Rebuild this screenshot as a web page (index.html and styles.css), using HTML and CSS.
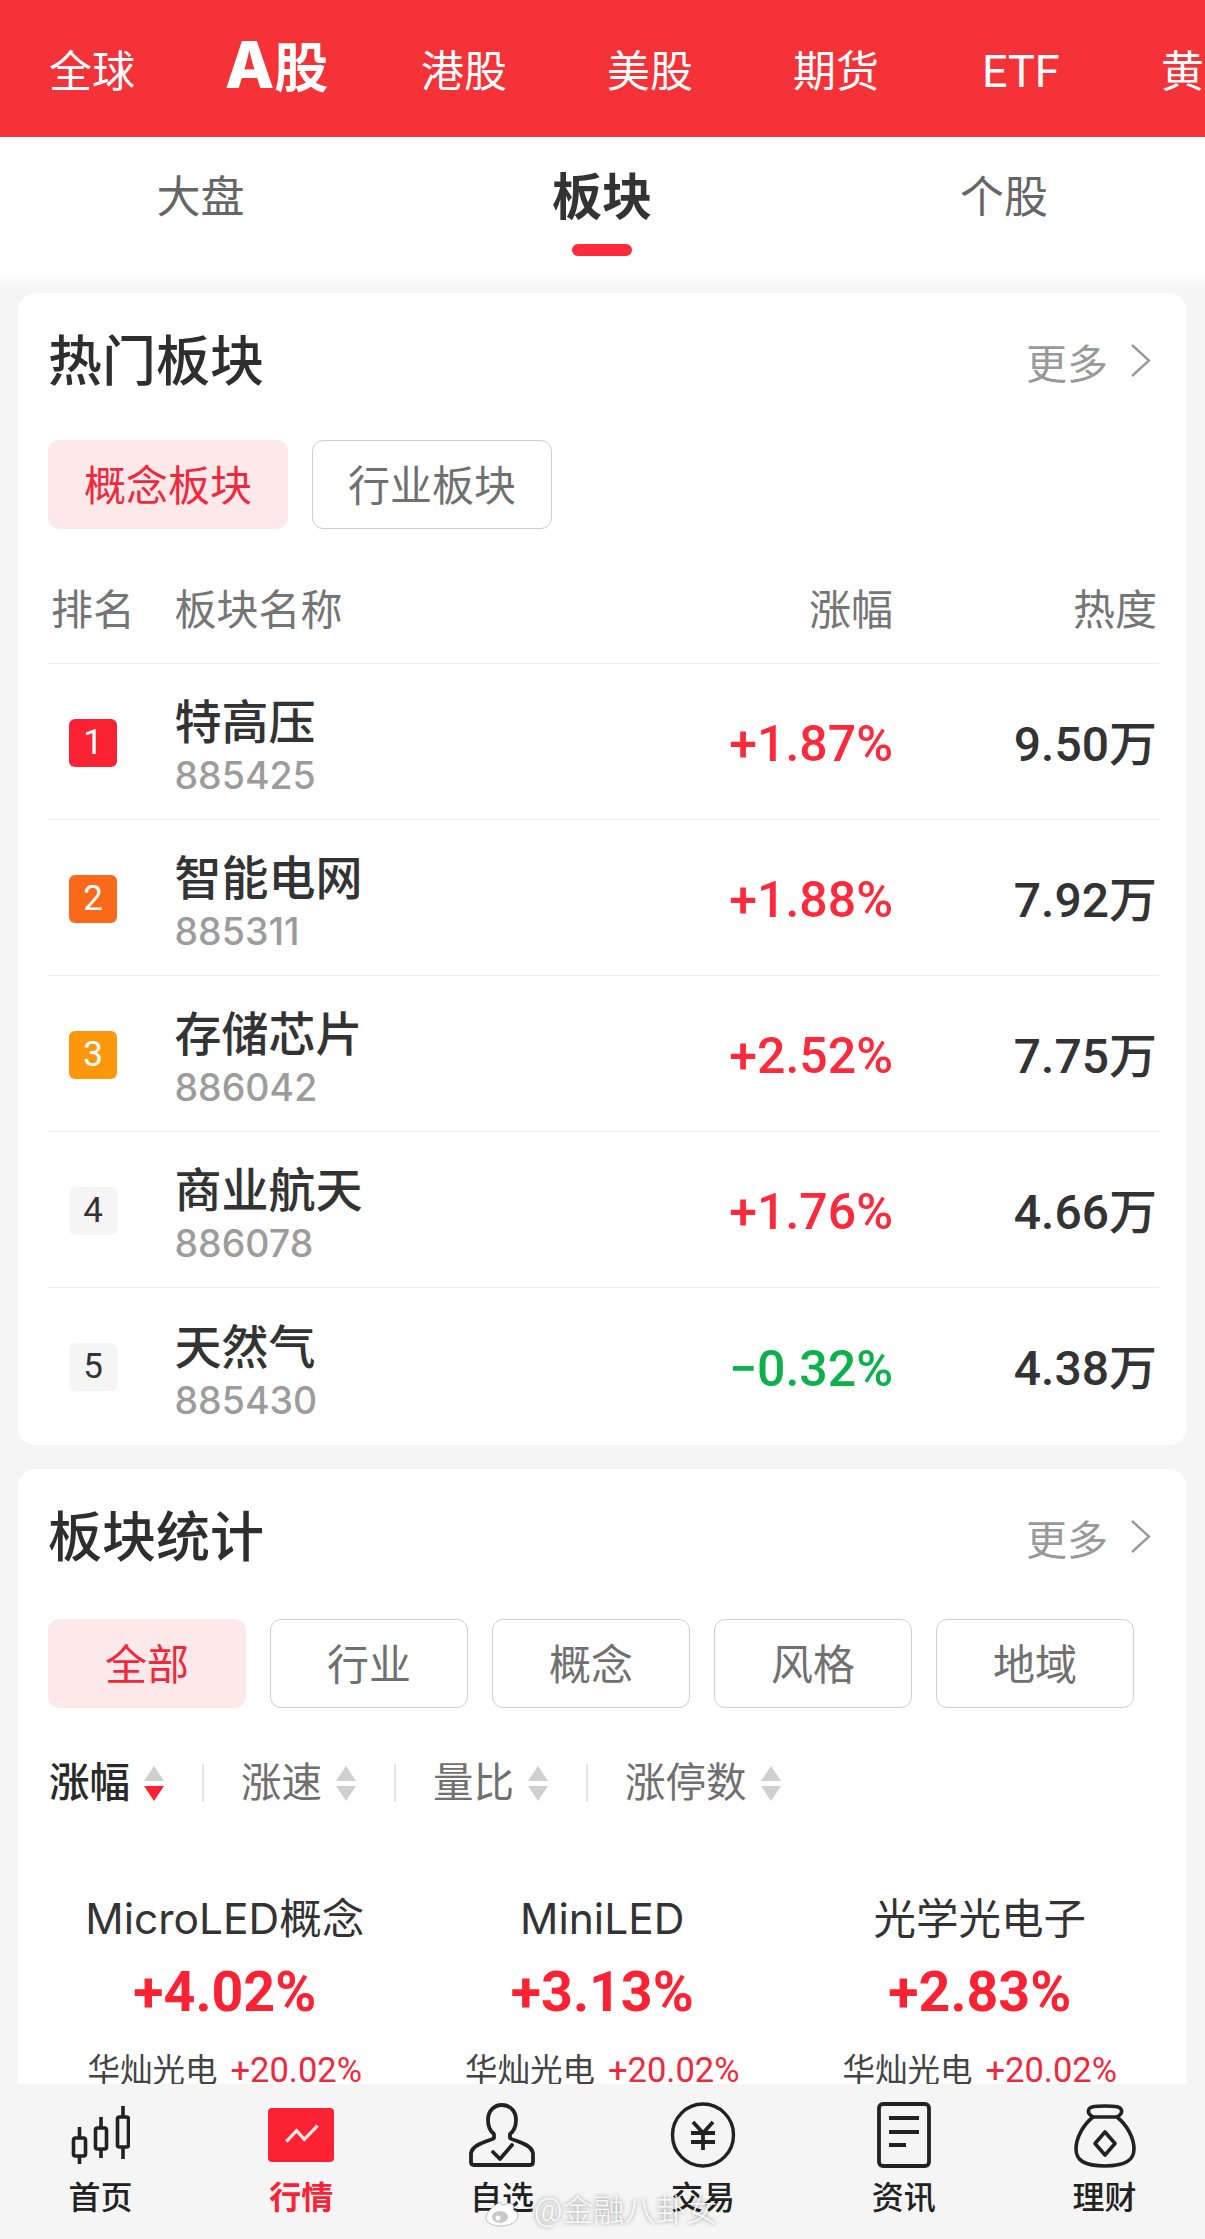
FILE: index.html
```html
<!DOCTYPE html>
<html lang="zh">
<head>
<meta charset="utf-8">
<title>行情</title>
<link rel="stylesheet" href="styles.css">
</head>
<body>
<div class="app">
  <header class="top">
    <span class="top-item t1">全球</span>
    <span class="top-item t2 on"><span class="big-a">A</span>股</span>
    <span class="top-item t3">港股</span>
    <span class="top-item t4">美股</span>
    <span class="top-item t5">期货</span>
    <span class="top-item t6">ETF</span>
    <span class="top-item t7">黄</span>
  </header>
  <nav class="sub">
    <span class="sub-item">大盘</span>
    <span class="sub-item on">板块</span>
    <span class="sub-item">个股</span>
  </nav>
  <main class="content">
    <section class="card hot">
      <div class="card-head">
        <h2>热门板块</h2>
        <span class="more">更多<svg class="chev" viewBox="0 0 21 33"><path d="M2 1l17 15.500L2 32" fill="none" stroke="#9a9a9a" stroke-width="2.400"/></svg></span>
      </div>
      <div class="chips hot-chips">
        <span class="chip on">概念板块</span>
        <span class="chip">行业板块</span>
      </div>
      <div class="thead">
        <span class="c-rank">排名</span>
        <span class="c-name">板块名称</span>
        <span class="c-pct">涨幅</span>
        <span class="c-val">热度</span>
      </div>
      <div class="row">
        <span class="c-rank"><b class="badge r1">1</b></span>
        <span class="c-name"><em>特高压</em><small>885425</small></span>
        <span class="c-pct up">+1.87%</span>
        <span class="c-val">9.50万</span>
      </div>
      <div class="row">
        <span class="c-rank"><b class="badge r2">2</b></span>
        <span class="c-name"><em>智能电网</em><small>885311</small></span>
        <span class="c-pct up">+1.88%</span>
        <span class="c-val">7.92万</span>
      </div>
      <div class="row">
        <span class="c-rank"><b class="badge r3">3</b></span>
        <span class="c-name"><em>存储芯片</em><small>886042</small></span>
        <span class="c-pct up">+2.52%</span>
        <span class="c-val">7.75万</span>
      </div>
      <div class="row">
        <span class="c-rank"><b class="badge">4</b></span>
        <span class="c-name"><em>商业航天</em><small>886078</small></span>
        <span class="c-pct up">+1.76%</span>
        <span class="c-val">4.66万</span>
      </div>
      <div class="row">
        <span class="c-rank"><b class="badge">5</b></span>
        <span class="c-name"><em>天然气</em><small>885430</small></span>
        <span class="c-pct down">−0.32%</span>
        <span class="c-val">4.38万</span>
      </div>
    </section>
    <section class="card stats">
      <div class="card-head">
        <h2>板块统计</h2>
        <span class="more">更多<svg class="chev" viewBox="0 0 21 33"><path d="M2 1l17 15.500L2 32" fill="none" stroke="#9a9a9a" stroke-width="2.400"/></svg></span>
      </div>
      <div class="chips stat-chips">
        <span class="chip wide on">全部</span>
        <span class="chip wide">行业</span>
        <span class="chip wide">概念</span>
        <span class="chip wide">风格</span>
        <span class="chip wide">地域</span>
      </div>
      <div class="sorts">
        <span class="sort on">涨幅<i class="arrows"><u></u><u class="dn"></u></i></span>
        <span class="sort">涨速<i class="arrows"><u></u><u></u></i></span>
        <span class="sort">量比<i class="arrows"><u></u><u></u></i></span>
        <span class="sort">涨停数<i class="arrows"><u></u><u></u></i></span>
      </div>
      <div class="tiles">
        <div class="tile">
          <div class="tile-name">MicroLED概念</div>
          <div class="tile-pct">+4.02%</div>
          <div class="tile-sub">华灿光电<span>+20.02%</span></div>
        </div>
        <div class="tile">
          <div class="tile-name">MiniLED</div>
          <div class="tile-pct">+3.13%</div>
          <div class="tile-sub">华灿光电<span>+20.02%</span></div>
        </div>
        <div class="tile">
          <div class="tile-name">光学光电子</div>
          <div class="tile-pct">+2.83%</div>
          <div class="tile-sub">华灿光电<span>+20.02%</span></div>
        </div>
      </div>
    </section>
  </main>
  <footer class="tabbar">
    <div class="tab">
      <svg class="ico" width="60" height="66" viewBox="0 0 60 66" fill="none" stroke="#222" stroke-width="3.600" stroke-linejoin="round">
        <rect x="3.500" y="36" width="12" height="18" rx="2"/><path d="M9.500 25v11M9.500 54v8"/>
        <rect x="25.500" y="26" width="11" height="21" rx="2"/><path d="M31 15v11M31 47v9"/>
        <rect x="47.500" y="15" width="11" height="30" rx="2"/><path d="M53 4v11M53 45v12"/>
      </svg>
      <span>首页</span>
    </div>
    <div class="tab on">
      <svg class="ico" width="66" height="66" viewBox="0 0 66 66" fill="none">
        <rect x="0" y="6" width="66" height="54" rx="4" fill="#fb2233"/>
        <path d="M18.300 39.700l10.300-11 7.700 8.600 13.300-13.600" stroke="#f6e9e6" stroke-width="3.200"/>
      </svg>
      <span>行情</span>
    </div>
    <div class="tab">
      <svg class="ico" width="66" height="66" viewBox="0 0 66 66" fill="none" stroke="#222" stroke-width="3.800" stroke-linejoin="round" stroke-linecap="round">
        <path d="M33 3c-9 0-14 7-14 15 0 6 2 11 6 14v4c-3 3-21 5-23 15v9c0 2 1 3 3 3h56c2 0 3-1 3-3v-9c-2-10-20-12-23-15v-4c4-3 6-8 6-14 0-8-5-15-14-15z"/>
        <path d="M24 50l7 7 12-14"/>
      </svg>
      <span>自选</span>
    </div>
    <div class="tab">
      <svg class="ico" width="66" height="66" viewBox="0 0 66 66" fill="none" stroke="#222" stroke-width="3.400">
        <ellipse cx="33" cy="33" rx="30.500" ry="31"/>
        <path d="M23 20l10 11 10-11M21 31h24M21 40h24M33 31v17" stroke-width="3.800"/>
      </svg>
      <span>交易</span>
    </div>
    <div class="tab">
      <svg class="ico" width="54" height="66" viewBox="0 0 54 66" fill="none" stroke="#222" stroke-width="3.800" stroke-linejoin="round">
        <rect x="2" y="2" width="50" height="62" rx="4"/>
        <path d="M12 16h30M12 30h30M12 43h17"/>
      </svg>
      <span>资讯</span>
    </div>
    <div class="tab">
      <svg class="ico" width="62" height="66" viewBox="0 0 62 66" fill="none" stroke="#222" stroke-width="3.600" stroke-linejoin="round">
        <path d="M19 15c-3-2-6-4-4-8 1-2 4-3 16-3s15 1 16 3c2 4-1 6-4 8"/>
        <path d="M19 15h24c10 8 17 21 17 32 0 11-8 17-29 17S2 58 2 47c0-11 7-24 17-32z"/>
        <path d="M31 30l10 11.500L31 53 21 41.500z"/>
      </svg>
      <span>理财</span>
    </div>
  </footer>
  <div class="mark">
    <svg class="mark-logo" width="38" height="31" viewBox="0 0 38 31">
      <path d="M16 6C7 10 1 17 1 22c0 5 7 8 15 8 10 0 17-5 17-11 0-3-3-4-5-5 1-3 1-5-1-6-3-1-6 0-9 1-2 1-2-2-2-3z" fill="#fff" stroke="#bbb" stroke-width="1"/>
      <ellipse cx="15" cy="21" rx="8" ry="6" fill="#c9c9c9"/>
      <circle cx="13" cy="22" r="2.500" fill="#fff"/>
      <path d="M27 2c5 0 9 4 8 10" fill="none" stroke="#fff" stroke-width="2.500"/>
    </svg>
    <span>@金融八卦女</span>
  </div>
</div>
</body>
</html>
```
FILE: styles.css
```css
* { box-sizing: border-box; }
html, body { margin: 0; padding: 0; }
body {
  width: 1205px;
  height: 2239px;
  overflow: hidden;
  background: #f5f5f5;
  font-family: "Roboto", "Noto Sans CJK SC", sans-serif;
  color: #333;
}
.app { position: relative; width: 1205px; height: 2239px; overflow: hidden; display: flex; flex-direction: column; }

.top {
  height: 137px;
  flex: none;
  background: #f53238;
  color: #fff;
  display: flex;
  align-items: center;
  padding-left: 49px;
  white-space: nowrap;
  overflow: hidden;
  font-size: 43px;
  line-height: 1;
}
.top-item { flex: none; position: relative; top: 4px; }
.t1 { width: 176px; }
.t2 { width: 196px; font-size: 54px; font-weight: 700; top: -4px; }
.big-a { font-family: "Inter", sans-serif; font-size: 64px; font-weight: 800; }
.t3, .t4, .t5 { width: 186px; }
.t5 { width: 189px; }
.t6 { width: 179px; font-weight: 400; font-size: 45px; top: 3px; }

.sub {
  height: 133px;
  flex: none;
  background: #fff;
  display: grid;
  grid-template-columns: 401px 402px 402px;
  padding-top: 36px;
  justify-items: center;
  align-items: start;
  font-size: 44px;
  line-height: 50px;
  color: #666;
}
.sub-item { position: relative; }
.sub-item.on { color: #333; font-weight: 700; font-size: 50px; }
.sub-item.on::after {
  content: "";
  position: absolute;
  left: 50%;
  top: 71px;
  width: 60px;
  height: 12px;
  margin-left: -30px;
  border-radius: 6px;
  background: #fb2a3c;
}

.content { flex: 1; min-height: 0; padding: 23px 18px 0 18px; background: linear-gradient(#fff, #f5f5f5 23px); }
.card { background: #fff; border-radius: 18px; padding: 0 30px; }
.hot { height: 1152px; margin-bottom: 24px; }
.stats { height: 700px; }

.card-head { display: flex; justify-content: space-between; align-items: center; height: 135px; padding-top: 4px; }
h2 { margin: 0; font-size: 54px; line-height: 60px; font-weight: 500; color: #2e2e2e; }
.more { display: flex; align-items: center; font-size: 41px; color: #999; margin-right: 6px; position: relative; top: -2px; }
.chev { width: 21px; height: 33px; margin-left: 22px; }

.chips { display: flex; }
.hot-chips { gap: 24px; height: 89px; margin-top: 12px; }
.stat-chips { gap: 24px; height: 89px; margin-top: 15px; }
.chip {
  width: 240px;
  height: 89px;
  border: 1.500px solid #cfcfcf;
  border-radius: 11px;
  font-size: 42px;
  line-height: 86px;
  padding-top: 3px;
  text-align: center;
  color: #707070;
}
.chip.wide { width: 198px; }
.chip.on { background: #fde9ea; border-color: #fde9ea; color: #f0283c; }

.thead, .row { display: flex; align-items: center; margin-right: -2px; }
.thead {
  height: 135px;
  padding-top: 20px;
  font-size: 42px;
  color: #757575;
  border-bottom: 1.500px solid #eee;
}
.row { height: 156px; border-bottom: 1.500px solid #eee; font-size: 50px; }
.row:last-child { border-bottom: 0; }
.c-rank { width: 126.500px; flex: none; padding-left: 3px; }
.c-name { flex: 1; display: flex; flex-direction: column; }
.row .c-name { padding-top: 9px; }
.c-pct { width: 260px; text-align: right; flex: none; font-weight: 500; }
.row .c-pct { padding-top: 5px; }
.c-val { width: 266px; text-align: right; flex: none; padding-right: 2px; font-weight: 500; font-size: 48px; color: #333; }
.thead .c-pct, .thead .c-val { font-weight: 400; color: #757575; font-size: 42px; }
.up { color: #fb2a3c; }
.down { color: #0cb14b; }
.row .c-val { position: relative; top: -2px; }
.badge {
  display: block;
  width: 48px;
  height: 48px;
  margin-left: 18px;
  margin-top: 2px;
  border-radius: 6px;
  background: #f5f5f5;
  color: #333;
  font-size: 35px;
  font-weight: 400;
  line-height: 48px;
  text-align: center;
}
.r1 { background: #fb2233; color: #fff; }
.r2 { background: #fb6a1a; color: #fff; }
.r3 { background: #fd980d; color: #fff; }
.c-name em { font-style: normal; font-size: 47px; line-height: 56px; color: #333; font-weight: 500; }
.c-name small { font-family: "Inter", sans-serif; font-size: 37.500px; line-height: 42px; margin-top: 4px; color: #9c9c9c; font-weight: 500; }

.sorts { display: flex; align-items: center; margin-top: 56px; height: 38px; font-size: 40.500px; color: #707070; line-height: 38px; padding-left: 1px; }
.sort { display: flex; align-items: center; padding-right: 38px; margin-right: 37px; border-right: 2px solid #e4e4e4; height: 38px; }
.sort:last-child { border-right: 0; padding-right: 0; margin-right: 0; }
.sort.on { color: #2a2a2a; font-weight: 500; }
.arrows { display: flex; flex-direction: column; gap: 5px; margin-left: 14px; width: 20px; }
.arrows u { display: block; width: 0; height: 0; border-left: 10px solid transparent; border-right: 10px solid transparent; border-bottom: 15px solid #cfcfcf; }
.arrows u + u { border-bottom: 0; border-top: 15px solid #cfcfcf; }
.arrows u.dn { border-top-color: #fb2233; }

.tiles { display: grid; grid-template-columns: repeat(3, 377.500px); margin: 92px 0 0 -12px; }
.tile { text-align: center; }
.tile-name { font-family: "Inter", "Noto Sans CJK SC", sans-serif; font-size: 42.500px; line-height: 50px; color: #333; }
.tile-pct { font-size: 55.500px; line-height: 60px; margin-top: 19px; font-weight: 700; color: #fb2233; }
.tile-sub { margin-top: 27px; font-size: 32.500px; line-height: 40px; color: #444; white-space: nowrap; }
.tile-sub span { color: #f0283c; margin-left: 13px; font-size: 34.500px; }

.tabbar {
  position: absolute;
  left: 0;
  right: 0;
  bottom: 0;
  height: 155px;
  background: #f5f5f5;
  display: grid;
  grid-template-columns: repeat(6, 1fr);
}
.tab { display: flex; flex-direction: column; align-items: center; padding-top: 18px; font-size: 32px; font-weight: 500; color: #222; }
.ico { height: 66px; display: block; flex: none; }
.tab span { margin-top: 12px; line-height: 36px; }
.tab.on span { color: #fb2233; font-weight: 700; }

.mark {
  position: absolute;
  left: 485px;
  top: 2193px;
  display: flex;
  align-items: center;
  gap: 11px;
  color: rgba(255,255,255,.92);
  font-size: 31px;
  line-height: 36px;
  font-weight: 300;
  text-shadow: 0 0 4px rgba(0,0,0,.45);
}
.mark-logo { flex: none; }
```
